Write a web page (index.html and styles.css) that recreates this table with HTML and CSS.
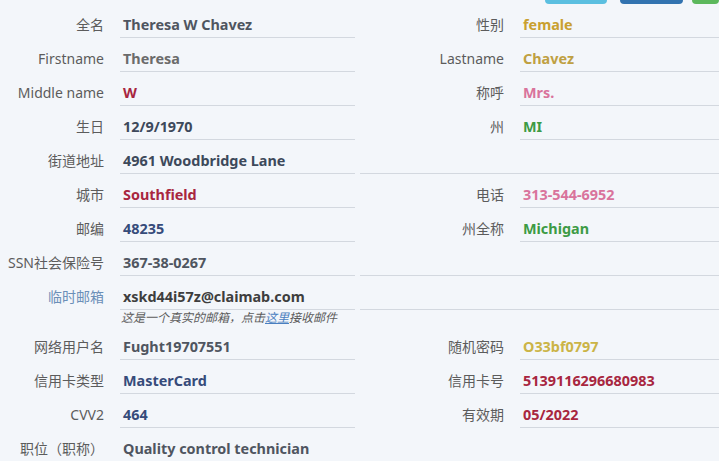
FILE: index.html
```html
<!DOCTYPE html>
<html lang="zh-CN">
<head>
    <meta charset="UTF-8">
    <meta name="viewport" content="width=device-width, initial-scale=1.0">
    <title>个人信息</title>
    <link rel="stylesheet" href="styles.css">
</head>
<body>
    <!-- 顶部按钮 (只露出底边) -->
    <div class="toolbar">
        <span class="btn btn-info"></span>
        <span class="btn btn-primary"></span>
        <span class="btn btn-success"></span>
    </div>

    <div class="info">
        <div class="lbl">全名</div>
        <div class="val v-dark">Theresa W Chavez</div>
        <div class="lbl">性别</div>
        <div class="val v-gold">female</div>

        <div class="lbl">Firstname</div>
        <div class="val v-gray">Theresa</div>
        <div class="lbl">Lastname</div>
        <div class="val v-olive">Chavez</div>

        <div class="lbl">Middle name</div>
        <div class="val v-red">W</div>
        <div class="lbl">称呼</div>
        <div class="val v-pink">Mrs.</div>

        <div class="lbl">生日</div>
        <div class="val v-slate">12/9/1970</div>
        <div class="lbl">州</div>
        <div class="val v-green">MI</div>

        <div class="lbl">街道地址</div>
        <div class="val v-slate">4961 Woodbridge Lane</div>
        <div class="val empty"></div>

        <div class="lbl">城市</div>
        <div class="val v-red">Southfield</div>
        <div class="lbl">电话</div>
        <div class="val v-pink">313-544-6952</div>

        <div class="lbl">邮编</div>
        <div class="val v-blue">48235</div>
        <div class="lbl">州全称</div>
        <div class="val v-green">Michigan</div>

        <div class="lbl">SSN社会保险号</div>
        <div class="val v-dark">367-38-0267</div>
        <div class="val empty"></div>

        <div class="lbl lbl-link">临时邮箱</div>
        <div class="val v-black">xskd44i57z@claimab.com</div>
        <div class="val empty"></div>
        <div class="note">这是一个真实的邮箱，点击<a href="#">这里</a>接收邮件</div>

        <div class="lbl">网络用户名</div>
        <div class="val v-dark">Fught19707551</div>
        <div class="lbl">随机密码</div>
        <div class="val v-yellow">O33bf0797</div>

        <div class="lbl">信用卡类型</div>
        <div class="val v-blue">MasterCard</div>
        <div class="lbl">信用卡号</div>
        <div class="val v-red">5139116296680983</div>

        <div class="lbl">CVV2</div>
        <div class="val v-blue">464</div>
        <div class="lbl">有效期</div>
        <div class="val v-red">05/2022</div>

        <div class="lbl">职位（职称）</div>
        <div class="val v-dark">Quality control technician</div>
    </div>
</body>
</html>
```

FILE: styles.css
```css
body {
    margin: 0;
    background-color: #f3f6fa;
    font-family: "Noto Sans", "Noto Sans CJK SC", sans-serif;
    overflow: hidden;
}

.toolbar {
    display: flex;
    height: 4px;
    padding-left: 545px;
}

.btn {
    display: block;
    height: 4px;
    border-radius: 0 0 4px 4px;
}

.btn-info {
    width: 68px;
    background-color: #5bbfe0;
}

.btn-primary {
    width: 70px;
    margin-left: 13px;
    background-color: #3273b0;
}

.btn-success {
    width: 30px;
    margin-left: 9px;
    background-color: #5cb85c;
}

.info {
    display: grid;
    grid-template-columns: 120px 235px 165px 1fr;
}

.lbl {
    box-sizing: border-box;
    height: 34px;
    padding: 12px 16px 0 0;
    line-height: 18px;
    font-size: 14px;
    text-align: right;
    color: #5c5c5c;
    white-space: nowrap;
}

.lbl-link {
    color: #6b8fb8;
}

.val {
    box-sizing: border-box;
    height: 34px;
    padding: 12px 0 0 3px;
    line-height: 18px;
    font-size: 14.4px;
    font-weight: bold;
    border-bottom: 1px solid #d3d8df;
    white-space: nowrap;
}

.empty {
    grid-column: span 2;
    margin-left: 5px;
}

.note {
    grid-column: 2 / 5;
    height: 16px;
    padding-left: 1px;
    line-height: 16px;
    font-size: 12px;
    font-style: italic;
    color: #5c5c5c;
}

.note a {
    color: #4a7fc0;
}

.v-dark { color: #4f5560; }
.v-gray { color: #6b6b6b; }
.v-black { color: #3e3e3e; }
.v-slate { color: #3d495b; }
.v-blue { color: #364b7a; }
.v-red { color: #a8263f; }
.v-gold { color: #c9a030; }
.v-olive { color: #bfa042; }
.v-yellow { color: #cbb446; }
.v-pink { color: #d9739c; }
.v-green { color: #3d9b45; }
```
